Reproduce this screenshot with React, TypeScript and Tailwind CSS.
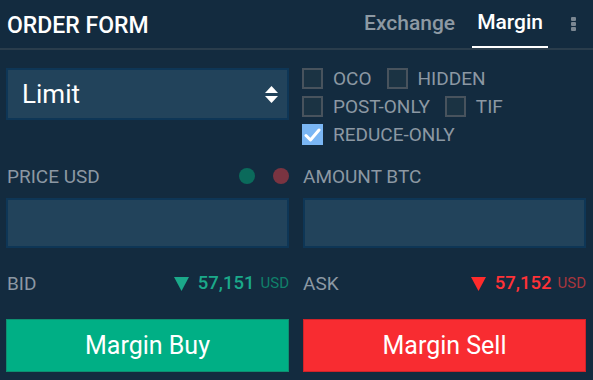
import { ReactNode } from 'react';

const font = { fontFamily: 'Roboto, "Liberation Sans", sans-serif' };

function Checkbox({ label, checked = false }: { label: string; checked?: boolean }) {
    return (
        <div className="flex items-center gap-[10px]">
            {checked ? (
                <span className="w-[21px] h-[21px] bg-[#7ab6f4] flex items-center justify-center">
                    <svg width="17" height="14" viewBox="0 0 17 14">
                        <path d="M2 7.5 L6.5 12 L15 2" fill="none" stroke="white" strokeWidth="3" strokeLinecap="round" strokeLinejoin="round" />
                    </svg>
                </span>
            ) : (
                <span className="w-[21px] h-[21px] border-2 border-[#48535d] bg-[#1b3343]" />
            )}
            <span className="text-[19px] leading-none text-[#8c98a3]">{label}</span>
        </div>
    );
}

function Quote({ label, value, up, children }: { label: string; value: string; up: boolean; children?: ReactNode }) {
    const tri = up ? '#1ba98a' : '#ff2b2b';
    return (
        <div className="flex items-center justify-between h-[23px]">
            <span className="text-[19px] leading-none text-[#8c98a3]">{label}</span>
            <div className="flex items-center">
                <svg width="15" height="14" viewBox="0 0 15 14" className="mr-[9px]">
                    <path d="M0 0 H15 L7.5 14 Z" fill={tri} />
                </svg>
                <span className={`text-[18.5px] leading-none font-medium ${up ? 'text-[#1ba98a]' : 'text-[#ff3237]'}`}>{value}</span>
                <span className={`ml-[6px] text-[15px] leading-none ${up ? 'text-[#10806a]' : 'text-[#a8363d]'}`}>USD</span>
            </div>
            {children}
        </div>
    );
}

export default function App() {
    return (
        <div className="w-[593px] h-[380px] bg-[#132b3f] overflow-hidden" style={font}>
            <div className="h-[48px] flex items-center justify-between pl-[7px] pr-[17px]">
                <h2 className="text-white text-[23px] font-medium leading-none pt-[2px]">ORDER FORM</h2>
                <div className="flex items-stretch h-full">
                    <div className="flex items-center px-[5px] text-[21px] font-medium text-[#8d99a3]">Exchange</div>
                    <div className="flex items-center px-[5px] ml-[12px] text-[21px] font-medium text-white border-b-2 border-white">Margin</div>
                    <div className="flex flex-col justify-center gap-[1px] ml-[23px]">
                        <span className="w-[5px] h-[4px] rounded-[1px] bg-[#7b8792]" />
                        <span className="w-[5px] h-[4px] rounded-[1px] bg-[#7b8792]" />
                        <span className="w-[5px] h-[4px] rounded-[1px] bg-[#7b8792]" />
                    </div>
                </div>
            </div>
            <div className="h-[2px] bg-[#2a3d4c]" />

            <div className="grid grid-cols-2 gap-x-[14px] pl-[6px] pr-[7px] pt-[18px]">
                <div className="h-[52px] border-2 border-[#0e3656] bg-[#22435b] flex items-center justify-between pl-[14px] pr-[9px]">
                    <span className="text-white text-[26px] leading-none">Limit</span>
                    <svg width="13" height="17" viewBox="0 0 13 17">
                        <path d="M6.5 0 L13 7 H0 Z" fill="white" />
                        <path d="M0 10 H13 L6.5 17 Z" fill="white" />
                    </svg>
                </div>
                <div className="flex flex-col gap-[7px] -ml-[1px]">
                    <div className="flex gap-[15px]">
                        <Checkbox label="OCO" />
                        <Checkbox label="HIDDEN" />
                    </div>
                    <div className="flex gap-[15px]">
                        <Checkbox label="POST-ONLY" />
                        <Checkbox label="TIF" />
                    </div>
                    <Checkbox label="REDUCE-ONLY" checked />
                </div>

                <div className="mt-[21px] flex items-center justify-between h-[20px]">
                    <span className="text-[19px] leading-none text-[#8c98a3] pl-[1px]">PRICE USD</span>
                    <div className="flex gap-[18px]">
                        <span className="w-[16px] h-[16px] rounded-full bg-[#0b6a5b]" />
                        <span className="w-[16px] h-[16px] rounded-full bg-[#7a3441]" />
                    </div>
                </div>
                <div className="mt-[21px] flex items-center h-[20px]">
                    <span className="text-[19px] leading-none text-[#8c98a3]">AMOUNT BTC</span>
                </div>

                <div className="mt-[12px] h-[50px] border-2 border-[#0e3656] bg-[#22435b]" />
                <div className="mt-[12px] h-[50px] border-2 border-[#0e3656] bg-[#22435b]" />

                <div className="mt-[24px] pl-[1px]">
                    <Quote label="BID" value="57,151" up />
                </div>
                <div className="mt-[24px]">
                    <Quote label="ASK" value="57,152" up={false} />
                </div>

                <button className="mt-[24px] h-[53px] bg-[#00af85] border border-[#0e8f70] text-white text-[25px] leading-none">
                    Margin Buy
                </button>
                <button className="mt-[24px] h-[53px] bg-[#f82c31] border border-[#cf2329] text-white text-[25px] leading-none">
                    Margin Sell
                </button>
            </div>
        </div>
    );
}
